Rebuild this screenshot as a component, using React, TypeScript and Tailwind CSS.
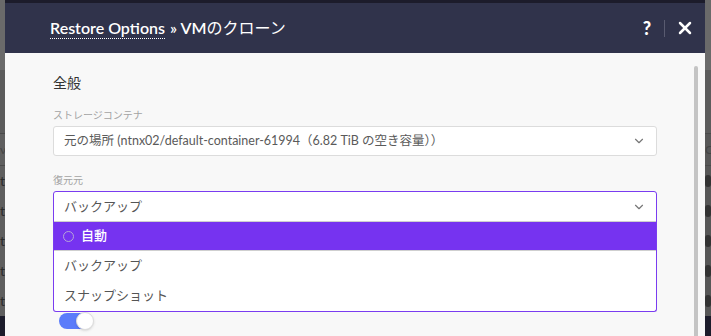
import { ChevronDown, X } from "lucide-react";

const font = {
  fontFamily: 'Lato, "Noto Sans CJK JP", sans-serif',
};

function Backdrop({ side }: { side: "left" | "right" }) {
  const rows = [0, 1, 2, 3, 4];
  return (
    <div className={`flex flex-col ${side === "left" ? "bg-[#5f5f5f]" : "bg-[#575757]"}`}>
      <div className="h-[70px] bg-[#6a6a6a]" />
      <div className="h-[63px] bg-[#5c5c5c]" />
      <div className="h-px bg-[#4a4a4a]" />
      <div className="h-[31px] flex items-center text-[#444] text-xs">
        {side === "left" ? "ν" : "C"}
      </div>
      <div className="h-px bg-[#4a4a4a]" />
      {rows.map((r) => (
        <div key={r} className="h-[30px] flex items-center text-[#2b2b2b] text-sm">
          {side === "left" ? "t" : <span className="block w-3 h-3 rounded-full bg-[#333]" />}
        </div>
      ))}
    </div>
  );
}

export default function App() {
  return (
    <div className="w-[711px] h-[336px] overflow-hidden bg-[#1c1c2b] flex flex-col" style={font}>
      <div className="h-[3px] shrink-0" />
      <div className="flex flex-1 min-h-0">
        <div className="w-[5px] overflow-hidden -mt-[3px]">
          <Backdrop side="left" />
        </div>
        <div className="w-[700px] flex flex-col">
          <div className="h-[50px] bg-[#30334b] flex items-center pl-[45px] pr-[10px] shrink-0">
            <div className="text-white text-[16px] font-semibold flex items-center gap-[5px]">
              <span className="border-b border-dotted border-white leading-[20px]">Restore Options</span>
              <span>» VM<span className="font-normal">のクローン</span></span>
            </div>
            <div className="ml-auto flex items-center text-white">
              <span className="text-[18px] font-black">?</span>
              <span className="w-px h-[17px] bg-[#595b70] ml-[13px] mr-[10px]" />
              <X size={20} strokeWidth={3} />
            </div>
          </div>
          <div className="flex-1 bg-[#f8f8f8] flex relative">
            <div className="flex-1 pl-[48px] pr-[48px] pt-[20px]">
              <div className="text-[14px] text-[#333] leading-[20px]">全般</div>
              <div className="mt-[15px] text-[10px] text-[#a3a3a3] leading-[14px]">ストレージコンテナ</div>
              <div className="mt-[4px] h-[30px] bg-white border border-[#dcdcdc] rounded-[3px] flex items-center pl-[10px] pr-[10px] text-[12.5px] text-[#5a5a5a]">
                <span>元の場所 (ntnx02/default-container-61994（6.82 TiB の空き容量））</span>
                <ChevronDown size={14} className="ml-auto text-[#777]" />
              </div>
              <div className="mt-[17px] text-[10px] text-[#a3a3a3] leading-[14px]">復元元</div>
              <div className="mt-[4px] relative">
                <div className="h-[31px] bg-white border border-[#7a3cf0] rounded-t-[3px] flex items-center pl-[10px] pr-[10px] text-[13px] text-[#555]">
                  <span>バックアップ</span>
                  <ChevronDown size={14} className="ml-auto text-[#777]" />
                </div>
                <div className="absolute left-0 right-0 top-[30px] bg-white border border-[#7a3cf0] border-t-0 rounded-b-[3px] flex flex-col text-[13px] text-[#555] z-10">
                  <div className="h-[29px] bg-[#7633f0] border-t border-[#cfcfcf] flex items-center pl-[9px] text-white font-medium">
                    <span className="w-[11px] h-[11px] rounded-full border border-[#b6a5d8] mr-[7px]" />
                    自動
                  </div>
                  <div className="h-px bg-[#cfcfcf]" />
                  <div className="h-[30px] flex items-center pl-[10px]">バックアップ</div>
                  <div className="h-[30px] flex items-center pl-[10px]">スナップショット</div>
                </div>
              </div>
              <div className="mt-[91px] ml-[6px] w-[33px] h-[16px] rounded-full bg-[#5b7cfa] relative">
                <span className="absolute right-[-2px] top-[-1px] w-[18px] h-[18px] rounded-full bg-white border border-[#ddd] shadow" />
              </div>
            </div>
            <div className="absolute right-[7px] top-[13px] bottom-0 w-[4px] bg-[#c4c4c4] rounded-t-sm" />
          </div>
        </div>
        <div className="w-[6px] overflow-hidden -mt-[3px]">
          <Backdrop side="right" />
        </div>
      </div>
    </div>
  );
}
